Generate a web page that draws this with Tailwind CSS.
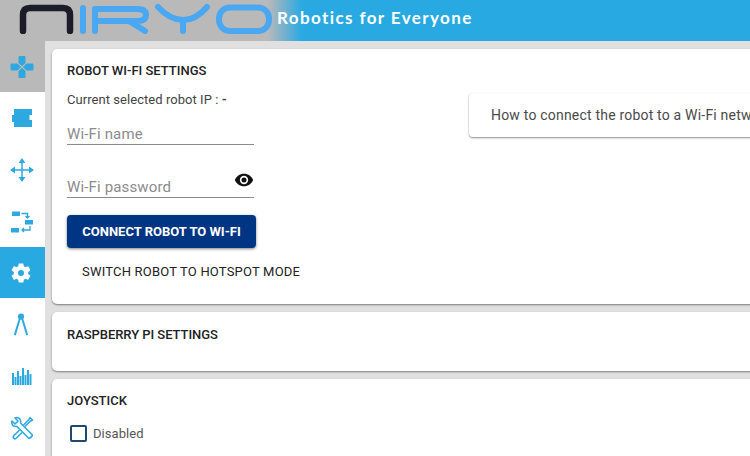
<!DOCTYPE html>
<html lang="en">
<head>
    <meta charset="UTF-8">
    <meta name="viewport" content="width=device-width, initial-scale=1.0">
    <title>Niryo Studio</title>
    <script src="https://cdn.jsdelivr.net/npm/@tailwindcss/browser@4"></script>
</head>
<body class="w-[750px] h-[456px] overflow-hidden bg-[#e0e0e0] font-['Roboto',sans-serif]">
    <header class="h-[41px] flex items-center bg-[linear-gradient(90deg,#b9b9b9_0,#b9b9b9_268px,#29a9e2_302px,#29a9e2_100%)]">
        <svg class="ml-[19px] w-[254px] h-[34px] -mt-[7px] shrink-0" viewBox="0 0 254 34" fill="none" stroke-linecap="round" stroke-linejoin="round">
            <path d="M4 31V15Q4 8 11 8H44Q51 8 51 15V31" stroke="#1c1c28" stroke-width="6.5"/>
            <g stroke="#4aa8f2" stroke-width="6">
                <path d="M64 8V31"/>
                <path d="M76 31V9H118Q127 9 127 15Q127 21 118 21H76M110 21L126 31"/>
                <path d="M139 7Q151 20 164 20Q177 20 188 7M164 20V31"/>
                <rect x="200" y="7.500" width="50" height="23.500" rx="11"/>
            </g>
        </svg>
        <span class="ml-[4px] -mt-[5px] text-white font-bold text-[17px] tracking-[1.4px] font-['Lato',sans-serif] whitespace-nowrap">Robotics for Everyone</span>
    </header>
    <div class="flex h-[415px]">
        <nav class="w-[45px] shrink-0 bg-white flex flex-col text-[#2ea9e0]">
            <a class="h-[51px] pr-[2px] bg-[#b9b9b9] flex items-center justify-center">
                <svg class="w-[24px] h-[24px]" viewBox="0 0 24 24" fill="currentColor" stroke="currentColor" stroke-width="1" stroke-linejoin="round">
                    <path d="M9 1.500h6v6.500L12 10.500 9 8zM9 22.500h6V16L12 13.500 9 16zM1 9h6.500L10.500 12l-3 3H1zM23 9h-6.500L13.500 12l3 3H23z"/>
                </svg>
            </a>
            <a class="h-[52px] pr-[2px] flex items-center justify-center">
                <svg class="w-[22px] h-[20px]" viewBox="0 0 22 20" fill="currentColor">
                    <path d="M3 1h18v6h-2.500v5H21v7H3v-5H1V7h2z"/>
                </svg>
            </a>
            <a class="h-[52px] pr-[2px] flex items-center justify-center">
                <svg class="w-[24px] h-[24px]" viewBox="0 0 24 24" fill="none" stroke="currentColor" stroke-width="1.500">
                    <path d="M12 3v18M3 12h18"/>
                    <path fill="currentColor" stroke="none" d="M12 0l3.500 5h-7zM12 24l3.500-5h-7zM0 12l5-3.500v7zM24 12l-5-3.500v7z"/>
                </svg>
            </a>
            <a class="h-[51px] pr-[2px] flex items-center justify-center">
                <svg class="w-[24px] h-[24px]" viewBox="0 0 24 24" fill="none" stroke="currentColor" stroke-width="1.400">
                    <rect x="2" y="1.500" width="8" height="4.500" fill="currentColor" stroke="none"/>
                    <rect x="15" y="10" width="8" height="4.500" fill="currentColor" stroke="none"/>
                    <rect x="1" y="18" width="8" height="4.500" fill="currentColor" stroke="none"/>
                    <path d="M11.500 3.500h6v4M15.500 6l2 2 2-2M20 16v4h-8M14 18l-2 2 2 2"/>
                </svg>
            </a>
            <a class="h-[51px] pr-[3px] bg-[#29a9e2] flex items-center justify-center">
                <svg class="w-[24px] h-[24px]" viewBox="0 0 24 24" fill="#fff">
                    <path fill-rule="evenodd" d="M19.140 12.940c.04-.3.06-.61.06-.94s-.02-.64-.07-.94l2.030-1.580a.5.5 0 0 0 .12-.61l-1.920-3.320a.5.5 0 0 0-.59-.22l-2.390.96a7 7 0 0 0-1.620-.94l-.36-2.540a.48.48 0 0 0-.48-.41h-3.840a.48.48 0 0 0-.47.41l-.36 2.540c-.59.24-1.130.57-1.620.94l-2.390-.96a.48.48 0 0 0-.59.22L2.740 8.870a.48.48 0 0 0 .12.61l2.030 1.580c-.05.3-.09.63-.09.94s.02.64.07.94l-2.030 1.580a.5.5 0 0 0-.12.61l1.920 3.320c.12.22.37.29.59.22l2.390-.96c.5.38 1.030.7 1.620.94l.36 2.540c.05.24.24.41.48.41h3.840c.24 0 .44-.17.47-.41l.36-2.540c.59-.24 1.130-.56 1.620-.94l2.390.96c.22.08.47 0 .59-.22l1.920-3.320a.48.48 0 0 0-.12-.61zM12 15a3 3 0 1 1 0-6 3 3 0 0 1 0 6z"/>
                </svg>
            </a>
            <a class="h-[52px] pr-[3px] flex items-center justify-center">
                <svg class="w-[18px] h-[23px]" viewBox="0 0 20 26" fill="none" stroke="currentColor" stroke-width="2.200">
                    <path d="M9 5L3 25M11 5l6 20"/>
                    <circle cx="10" cy="4" r="3.500" fill="currentColor" stroke="none"/>
                </svg>
            </a>
            <a class="h-[52px] pr-[2px] flex items-center justify-center">
                <svg class="w-[22px] h-[20px]" viewBox="0 0 22 20" fill="currentColor">
                    <path d="M1 7h2v12H1zM3.500 11h2v8h-2zM6 5h2v14H6zM8.500 10h2v9h-2zM11 2h2v17h-2zM13.500 9h2v10h-2zM16 4h2v15h-2zM18.500 8h2v11h-2z"/>
                </svg>
            </a>
            <a class="h-[52px] pr-[2px] flex items-center justify-center">
                <svg class="w-[24px] h-[24px]" viewBox="0 0 24 24" fill="none" stroke="currentColor" stroke-width="1.600" stroke-linejoin="round">
                    <path d="M2 5l3 3 3-3-3-3c3-1.500 6.500 1 5.500 5L22 18.500c1 1.500-2 4.500-3.500 3.500L7 10.500C3.500 11 1 8.500 2 5z"/>
                    <path d="M13.500 9L19 3.500l1-2 2.500 2.500-2 1L15 10.500M9.500 14L4 19.500c-2 2 .5 4.500 2.500 2.500l5.500-5.500"/>
                </svg>
            </a>
        </nav>
        <main class="flex-1 min-w-0 pl-[7px] pt-[8px] flex flex-col gap-[8px] overflow-hidden">
            <section class="h-[255px] shrink-0 w-[720px] bg-white rounded-[5px] shadow-[0_1px_2px_rgba(0,0,0,0.45)] pl-[15px] pt-[14px] flex">
                <div class="w-[402px] shrink-0">
                    <h2 class="text-[13px] leading-[16px] font-medium text-[#222]">ROBOT WI-FI SETTINGS</h2>
                    <p class="mt-[13px] text-[13px] leading-[16px] text-[#444] tracking-[0.05px]">Current selected robot IP : <span class="font-bold">-</span></p>
                    <div class="mt-[8px] w-[187px] h-[29px] border-b border-[#8a8a8a] text-[15px] leading-[18px] pt-[9px] text-[#8c8c8c] tracking-[0.15px]">Wi-Fi name</div>
                    <div class="mt-[24px] w-[187px] h-[29px] border-b border-[#8a8a8a] text-[15px] leading-[18px] pt-[9px] text-[#8c8c8c] tracking-[0.15px] relative">
                        <span>Wi-Fi password</span>
                        <svg class="absolute right-0 top-[1px] w-[20px] h-[20px]" viewBox="0 0 24 24" fill="#111">
                            <path d="M12 4.500C7 4.500 2.730 7.610 1 12c1.730 4.390 6 7.500 11 7.500s9.270-3.110 11-7.500c-1.730-4.390-6-7.500-11-7.500zM12 17a5 5 0 1 1 0-10 5 5 0 0 1 0 10zm0-8a3 3 0 1 0 0 6 3 3 0 0 0 0-6z"/>
                        </svg>
                    </div>
                    <button class="block mt-[17px] w-[189px] h-[33px] rounded-[4px] bg-[#003584] text-white text-[13px] font-bold shadow-[0_1px_3px_rgba(0,0,0,0.5)]">CONNECT ROBOT TO WI-FI</button>
                    <button class="block mt-[7px] ml-[15px] h-[33px] text-[13px] text-[#222] tracking-[0.2px]">SWITCH ROBOT TO HOTSPOT MODE</button>
                </div>
                <div class="mt-[30px] h-[44px] flex-1 bg-white rounded-l-[4px] shadow-[0_1px_2px_rgba(0,0,0,0.45)] pl-[22px] text-[14px] leading-[44px] text-[#4a4a4a] tracking-[0.2px] whitespace-nowrap overflow-hidden">How to connect the robot to a Wi-Fi network</div>
            </section>
            <section class="h-[59px] shrink-0 w-[720px] bg-white rounded-[5px] shadow-[0_1px_2px_rgba(0,0,0,0.45)] pl-[15px] pt-[15px]">
                <h2 class="text-[13px] leading-[16px] font-medium text-[#222] tracking-[-0.05px]">RASPBERRY PI SETTINGS</h2>
            </section>
            <section class="h-[100px] shrink-0 w-[720px] bg-white rounded-[5px] shadow-[0_1px_2px_rgba(0,0,0,0.45)] pl-[15px] pt-[14px]">
                <h2 class="text-[13px] leading-[16px] font-medium text-[#222]">JOYSTICK</h2>
                <label class="mt-[15px] ml-[3px] flex items-center gap-[6px] text-[13px] text-[#555] tracking-[0.05px]">
                    <span class="w-[17px] h-[17px] rounded-[2px] border-2 border-[#1d4a73]"></span>
                    Disabled
                </label>
            </section>
        </main>
    </div>
</body>
</html>
